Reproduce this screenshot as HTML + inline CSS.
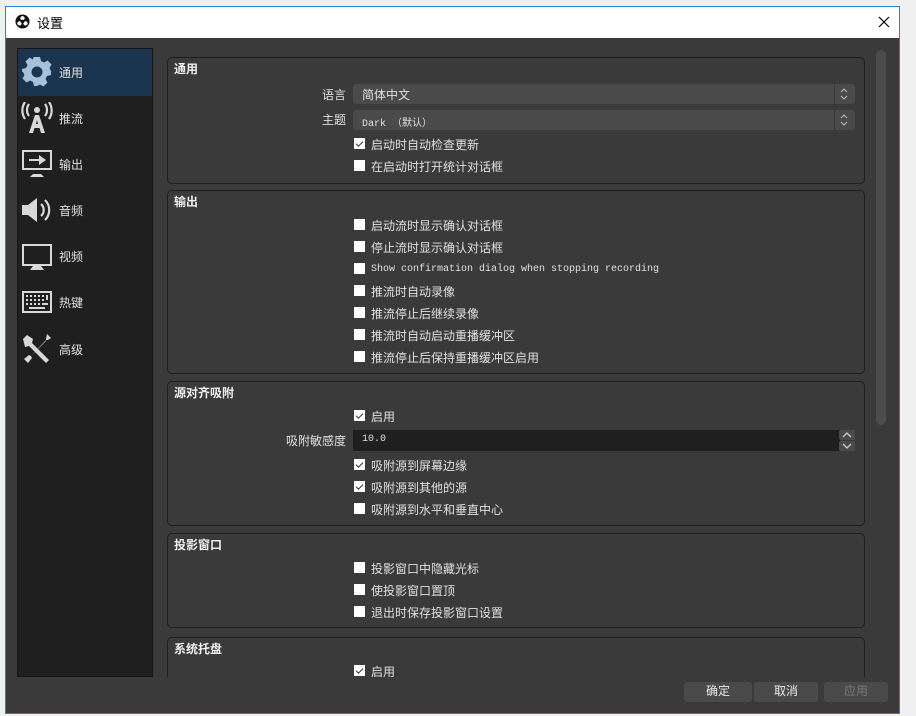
<!DOCTYPE html>
<html><head><meta charset="utf-8"><style>
*{margin:0;padding:0;box-sizing:border-box}
body{width:916px;height:716px;background:#f0f0f0;position:relative;overflow:hidden;font-family:"Liberation Sans","Noto Sans CJK SC",sans-serif;font-size:12px;color:#e0e0e0}
.win{position:absolute;left:5px;top:6px;width:895px;height:708px;border:1px solid #2b7fd6;background:#3a3a3a}
.tb{position:absolute;left:0;top:0;width:893px;height:31px;background:#fff;color:#000}
.a{position:absolute;white-space:nowrap}
.side{position:absolute;left:17px;top:48px;width:136px;height:629px;background:#1f1f1f;border:1px solid #161616}
.sel{position:absolute;left:0;top:0;width:134px;height:47px;background:#1b3550}
.grp{position:absolute;left:167px;width:698px;border:1px solid #1e1e1e;border-radius:5px;background:#3a3a3a}
.gt{position:absolute;left:6px;top:2px;font-weight:bold;color:#f0f0f0;font-size:12px}
.cb{position:absolute;left:354px;width:11px;height:11px;background:#fff}
.cb.c::after{content:"";position:absolute;left:2px;top:3px;width:6px;height:3px;border-left:1.5px solid #333;border-bottom:1.5px solid #333;transform:rotate(-45deg)}
.lbl{position:absolute;left:371px;white-space:nowrap}
.mono{font-family:"Liberation Mono","Noto Sans CJK SC",monospace;font-size:10px}
.btn{position:absolute;top:682px;height:20px;background:#4a4a4a;border-radius:3px;text-align:center;line-height:19px;color:#e8e8e8}
.ic{position:absolute;left:21px;fill:#d8d8d8}
</style></head><body>
<div class="win">
<div class="tb">
<svg class="a" style="left:9px;top:7px" width="15" height="15" viewBox="0 0 16 16"><circle cx="8" cy="8" r="7.5" fill="#111"/><circle cx="8" cy="4.5" r="2.3" fill="#fff"/><circle cx="4.8" cy="10" r="2.3" fill="#fff"/><circle cx="11.2" cy="10" r="2.3" fill="#fff"/><circle cx="8" cy="8" r="2" fill="#111"/></svg>
<div class="a" style="left:31px;top:6px;font-size:13px">设置</div>
<svg class="a" style="left:872px;top:9px" width="12" height="12"><path d="M1 1L11 11M11 1L1 11" stroke="#000" stroke-width="1.2"/></svg>
</div>
</div>
<div class="side"><div class="sel"></div></div>
<svg class="ic" style="top:56px" width="32" height="32" viewBox="0 0 32 32"><path fill="#a6c0dc" fill-rule="evenodd" d="M13 1h6l1 4 3 1.5 3.5-2 4 4-2 3.5L30 15v.5l1 .5v0l-1 0v3l-4 1-1.5 3 2 3.5-4 4-3.5-2L16 30h-3l-1-4-3-1.5-3.5 2-4-4 2-3.5L2 16l-1-.5V13h0l4-1 1.5-3-2-3.5 4-4 3.5 2L12 2zM16 10.5a5.5 5.5 0 1 0 0.01 0z"/></svg>
<svg class="ic" style="top:102px" width="32" height="32" viewBox="0 0 32 32"><circle cx="16" cy="8" r="3"/><path d="M8 2a10 10 0 0 0 0 12M24 2a10 10 0 0 1 0 12M4 0a15 15 0 0 0 0 17M28 0a15 15 0 0 1 0 17" stroke="#d8d8d8" stroke-width="2.2" fill="none"/><path d="M14 13h4l6 18h-4l-1.5-5h-5L12 31H8zM15 22h2l-1-4z" fill-rule="evenodd"/></svg>
<svg class="ic" style="top:149px" width="32" height="30" viewBox="0 0 32 30"><path d="M1 1h30v20H1zM3 3v16h26V3z" fill-rule="evenodd"/><path d="M12 25h8l3 3H9z"/><path d="M8 10h10V6l7 5-7 5v-4H8z"/></svg>
<svg class="ic" style="top:196px" width="32" height="28" viewBox="0 0 32 28"><path d="M1 9h6l9-7v24l-9-7H1z"/><path d="M20 8a8 8 0 0 1 0 12M24 4a14 14 0 0 1 0 20" stroke="#d8d8d8" stroke-width="2.2" fill="none"/></svg>
<svg class="ic" style="top:243px" width="32" height="28" viewBox="0 0 32 28"><path d="M1 1h30v22H1zM3 3v18h26V3z" fill-rule="evenodd"/><path d="M12 23h8l3 4H9z"/></svg>
<svg class="ic" style="top:290px" width="32" height="24" viewBox="0 0 32 24"><path d="M1 1h30v22H1zM3 3v18h26V3z" fill-rule="evenodd"/><g fill="#d8d8d8"><rect x="5" y="5" width="2" height="2"/><rect x="9" y="5" width="2" height="2"/><rect x="13" y="5" width="2" height="2"/><rect x="17" y="5" width="2" height="2"/><rect x="21" y="5" width="2" height="2"/><rect x="25" y="5" width="2" height="5"/><rect x="5" y="9" width="2" height="2"/><rect x="9" y="9" width="2" height="2"/><rect x="13" y="9" width="2" height="2"/><rect x="17" y="9" width="2" height="2"/><rect x="21" y="9" width="2" height="2"/><rect x="5" y="13" width="2" height="2"/><rect x="9" y="13" width="2" height="2"/><rect x="13" y="13" width="2" height="2"/><rect x="17" y="13" width="2" height="2"/><rect x="21" y="13" width="6" height="2"/><rect x="8" y="17" width="16" height="2"/></g></svg>
<svg class="ic" style="top:332px" width="32" height="32" viewBox="0 0 32 32"><path d="M2 7l4-4 6 4-1 4 17 17-3 3L8 14l-4 1z"/><path d="M26 2l4 4-3 2-2 0-15 16 1 2-4 5-4-4 5-4 2 1L25 9v-2z"/></svg>
<div class="a" style="left:59px;top:64px">通用</div>
<div class="a" style="left:59px;top:110px">推流</div>
<div class="a" style="left:59px;top:156px">输出</div>
<div class="a" style="left:59px;top:202px">音频</div>
<div class="a" style="left:59px;top:248px">视频</div>
<div class="a" style="left:59px;top:294px">热键</div>
<div class="a" style="left:59px;top:341px">高级</div>

<div class="grp" style="top:57px;height:127px"><div class="gt">通用</div></div>
<div class="grp" style="top:190px;height:184px"><div class="gt">输出</div></div>
<div class="grp" style="top:381px;height:145px"><div class="gt">源对齐吸附</div></div>
<div class="grp" style="top:533px;height:95px"><div class="gt">投影窗口</div></div>
<div class="grp" style="top:637px;height:60px;border-bottom:none;border-radius:5px 5px 0 0"><div class="gt">系统托盘</div></div>

<div class="a" style="left:322px;top:86px">语言</div>
<div class="a" style="left:322px;top:111px">主题</div>
<div class="a" style="left:353px;top:84px;width:502px;height:20px;background:#4a4a4a;border-radius:3px"><div class="a" style="left:9px;top:2px">简体中文</div><div class="a" style="left:481px;top:0;width:1px;height:20px;background:#3a3a3a"></div></div>
<div class="a" style="left:353px;top:110px;width:502px;height:20px;background:#4a4a4a;border-radius:3px"><div class="a mono" style="left:9px;top:4px">Dark （默认）</div><div class="a" style="left:481px;top:0;width:1px;height:20px;background:#3a3a3a"></div></div>
<svg class="a" style="left:839px;top:87px" width="10" height="14"><path d="M2 5l3-3 3 3M2 9l3 3 3-3" stroke="#bbb" fill="none"/></svg>
<svg class="a" style="left:839px;top:113px" width="10" height="14"><path d="M2 5l3-3 3 3M2 9l3 3 3-3" stroke="#bbb" fill="none"/></svg>

<div class="cb c" style="top:138px"></div><div class="lbl" style="top:136px">启动时自动检查更新</div>
<div class="cb" style="top:160px"></div><div class="lbl" style="top:158px">在启动时打开统计对话框</div>
<div class="cb" style="top:219px"></div><div class="lbl" style="top:217px">启动流时显示确认对话框</div>
<div class="cb" style="top:241px"></div><div class="lbl" style="top:239px">停止流时显示确认对话框</div>
<div class="cb" style="top:263px"></div><div class="lbl mono" style="top:264px">Show confirmation dialog when stopping recording</div>
<div class="cb" style="top:285px"></div><div class="lbl" style="top:283px">推流时自动录像</div>
<div class="cb" style="top:307px"></div><div class="lbl" style="top:305px">推流停止后继续录像</div>
<div class="cb" style="top:329px"></div><div class="lbl" style="top:327px">推流时自动启动重播缓冲区</div>
<div class="cb" style="top:351px"></div><div class="lbl" style="top:349px">推流停止后保持重播缓冲区启用</div>
<div class="cb c" style="top:410px"></div><div class="lbl" style="top:408px">启用</div>
<div class="a" style="left:286px;top:432px">吸附敏感度</div>
<div class="a" style="left:353px;top:430px;width:487px;height:21px;background:#1f1f1f"><div class="a mono" style="left:9px;top:4px">10.0</div></div>
<div class="a" style="left:839px;top:430px;width:16px;height:10px;background:#4a4a4a;border-radius:2px"></div>
<div class="a" style="left:839px;top:441px;width:16px;height:10px;background:#4a4a4a;border-radius:2px"></div>
<svg class="a" style="left:841px;top:430px" width="12" height="21"><path d="M2 7l4-4 4 4M2 14l4 4 4-4" stroke="#ccc" fill="none" stroke-width="1.3"/></svg>
<div class="cb c" style="top:459px"></div><div class="lbl" style="top:457px">吸附源到屏幕边缘</div>
<div class="cb c" style="top:481px"></div><div class="lbl" style="top:479px">吸附源到其他的源</div>
<div class="cb" style="top:503px"></div><div class="lbl" style="top:501px">吸附源到水平和垂直中心</div>
<div class="cb" style="top:562px"></div><div class="lbl" style="top:560px">投影窗口中隐藏光标</div>
<div class="cb" style="top:584px"></div><div class="lbl" style="top:582px">使投影窗口置顶</div>
<div class="cb" style="top:606px"></div><div class="lbl" style="top:604px">退出时保存投影窗口设置</div>
<div class="cb c" style="top:665px"></div><div class="lbl" style="top:663px">启用</div>
<div class="a" style="left:160px;top:677px;width:720px;height:36px;background:#3a3a3a"></div>

<div class="a" style="left:876px;top:50px;width:10px;height:375px;background:#4c4c4c;border-radius:5px"></div>

<div class="btn" style="left:684px;width:68px">确定</div>
<div class="btn" style="left:754px;width:64px">取消</div>
<div class="btn" style="left:824px;width:64px;color:#777">应用</div>
</body></html>
